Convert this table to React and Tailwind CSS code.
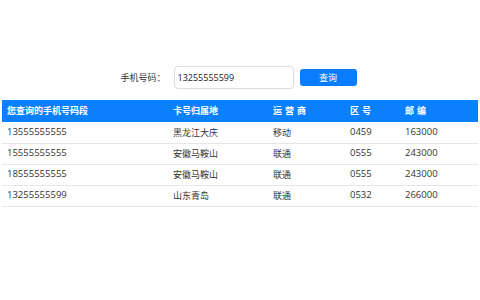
import React, { useState } from 'react';

const rows = [
    { phone: '13555555555', area: '黑龙江大庆', isp: '移动', code: '0459', zip: '163000' },
    { phone: '15555555555', area: '安徽马鞍山', isp: '联通', code: '0555', zip: '243000' },
    { phone: '18555555555', area: '安徽马鞍山', isp: '联通', code: '0555', zip: '243000' },
    { phone: '13255555599', area: '山东青岛', isp: '联通', code: '0532', zip: '266000' },
];

const App = () => {
    const [phone, setPhone] = useState('13255555599');

    return (
        <div className="min-h-screen bg-white pt-[66px] px-[2px] font-['Open_Sans','Noto_Sans_CJK_SC',sans-serif] text-[#333]">

            {/* search */}
            <div className="flex items-center justify-center pr-[3px]">
                <label className="text-[9px] mr-[8px]">手机号码：</label>
                <input
                    type="text"
                    value={phone}
                    onChange={(e) => setPhone(e.target.value)}
                    className="w-[120px] h-[23px] border border-[#dcdcdc] rounded-[4px] px-[3px] text-[9px] text-[#222] focus:outline-none"
                />
                <button className="ml-[6px] w-[57px] h-[17px] bg-[#0a7cff] text-white text-[9px] rounded-[3px]">
                    查询
                </button>
            </div>

            {/* results */}
            <table className="w-full mt-[11px] text-[9px] border-collapse">
                <thead>
                    <tr className="bg-[#0a80ff] text-white font-bold h-[22px] text-left">
                        <th className="w-[166px] pl-[5px] font-bold">您查询的手机号码段</th>
                        <th className="w-[100px] pl-[5px] font-bold">卡号归属地</th>
                        <th className="w-[77px] pl-[5px] font-bold tracking-[3px]">运营商</th>
                        <th className="w-[55px] pl-[5px] font-bold tracking-[3px]">区号</th>
                        <th className="pl-[5px] font-bold tracking-[3px]">邮编</th>
                    </tr>
                </thead>
                <tbody>
                    {rows.map((r, i) => (
                        <tr key={i} className="h-[21px] border-b border-[#e6e6e6]">
                            <td className="pl-[5px] text-[9.5px]">{r.phone}</td>
                            <td className="pl-[5px]">{r.area}</td>
                            <td className="pl-[5px]">{r.isp}</td>
                            <td className="pl-[5px] text-[9.5px]">{r.code}</td>
                            <td className="pl-[5px] text-[9.5px]">{r.zip}</td>
                        </tr>
                    ))}
                </tbody>
            </table>
        </div>
    );
};

export default App;
